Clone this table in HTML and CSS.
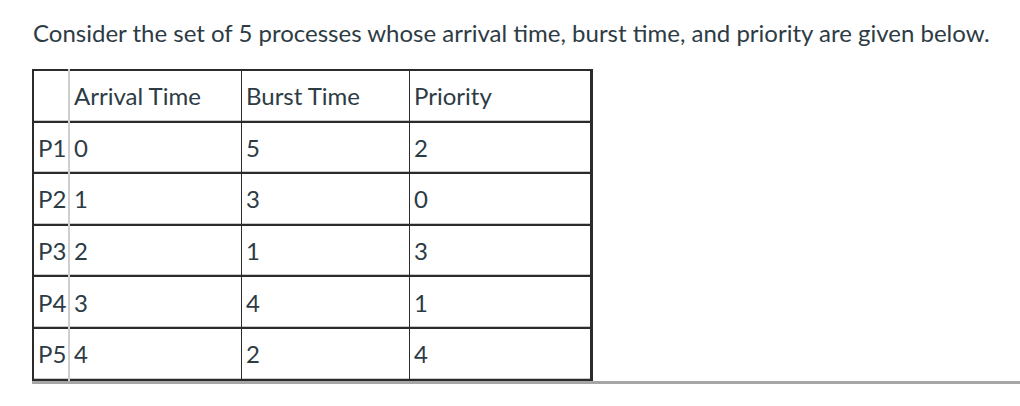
FILE: index.html
```html
<!DOCTYPE html>
<html>
<head>
<meta charset="utf-8">
<link rel="stylesheet" href="styles.css">
</head>
<body>
<div class="question">
  <p class="prompt">Consider the set of 5 processes whose arrival time, burst time, and priority are given below.</p>
  <div class="table-wrap">
    <table class="proc-table">
      <tr><td class="c1"></td><td class="c2">Arrival Time</td><td class="c3">Burst Time</td><td class="c4">Priority</td></tr>
      <tr><td class="c1">P1</td><td class="c2">0</td><td class="c3">5</td><td class="c4">2</td></tr>
      <tr><td class="c1">P2</td><td class="c2">1</td><td class="c3">3</td><td class="c4">0</td></tr>
      <tr><td class="c1">P3</td><td class="c2">2</td><td class="c3">1</td><td class="c4">3</td></tr>
      <tr><td class="c1">P4</td><td class="c2">3</td><td class="c3">4</td><td class="c4">1</td></tr>
      <tr><td class="c1">P5</td><td class="c2">4</td><td class="c3">2</td><td class="c4">4</td></tr>
    </table>
  </div>
</div>
</body>
</html>
```

FILE: styles.css
```css
html, body {
  margin: 0;
  padding: 0;
  background: #ffffff;
}
body {
  font-family: Lato, "Liberation Sans", sans-serif;
  color: #2d3b45;
  width: 1020px;
  height: 406px;
  overflow: hidden;
}
.question {
  padding: 18px 0 0 33px;
}
.prompt {
  margin: 0 0 22px 0;
  font-size: 24px;
  line-height: 29px;
}
.table-wrap {
  margin-left: -1px;
  border-bottom: 3px solid #a6a6a6;
}
.proc-table {
  border-collapse: collapse;
  width: 561px;
  border-top: 2px solid #2b2b2b;
  border-left: 2px solid #2b2b2b;
  border-right: 3px solid #2b2b2b;
  border-bottom: 2px solid #2b2b2b;
  font-size: 24px;
}
.proc-table td {
  height: 49.6px;
  padding: 0 0 0 4px;
  border-top: 2px solid #2b2b2b;
  border-right: 1px solid #2b2b2b;
  box-shadow: inset 0 -1px 0 #c8c8c8;
  vertical-align: middle;
  text-align: left;
  white-space: nowrap;
}
.proc-table tr:first-child td {
  border-top: none;
}
.proc-table .c1 {
  width: 30px;
  border-right: 2px solid #cfcfcf;
}
.proc-table .c2 { width: 167px; }
.proc-table .c3 { width: 163px; }
.proc-table .c4 { border-right: none; }
```
